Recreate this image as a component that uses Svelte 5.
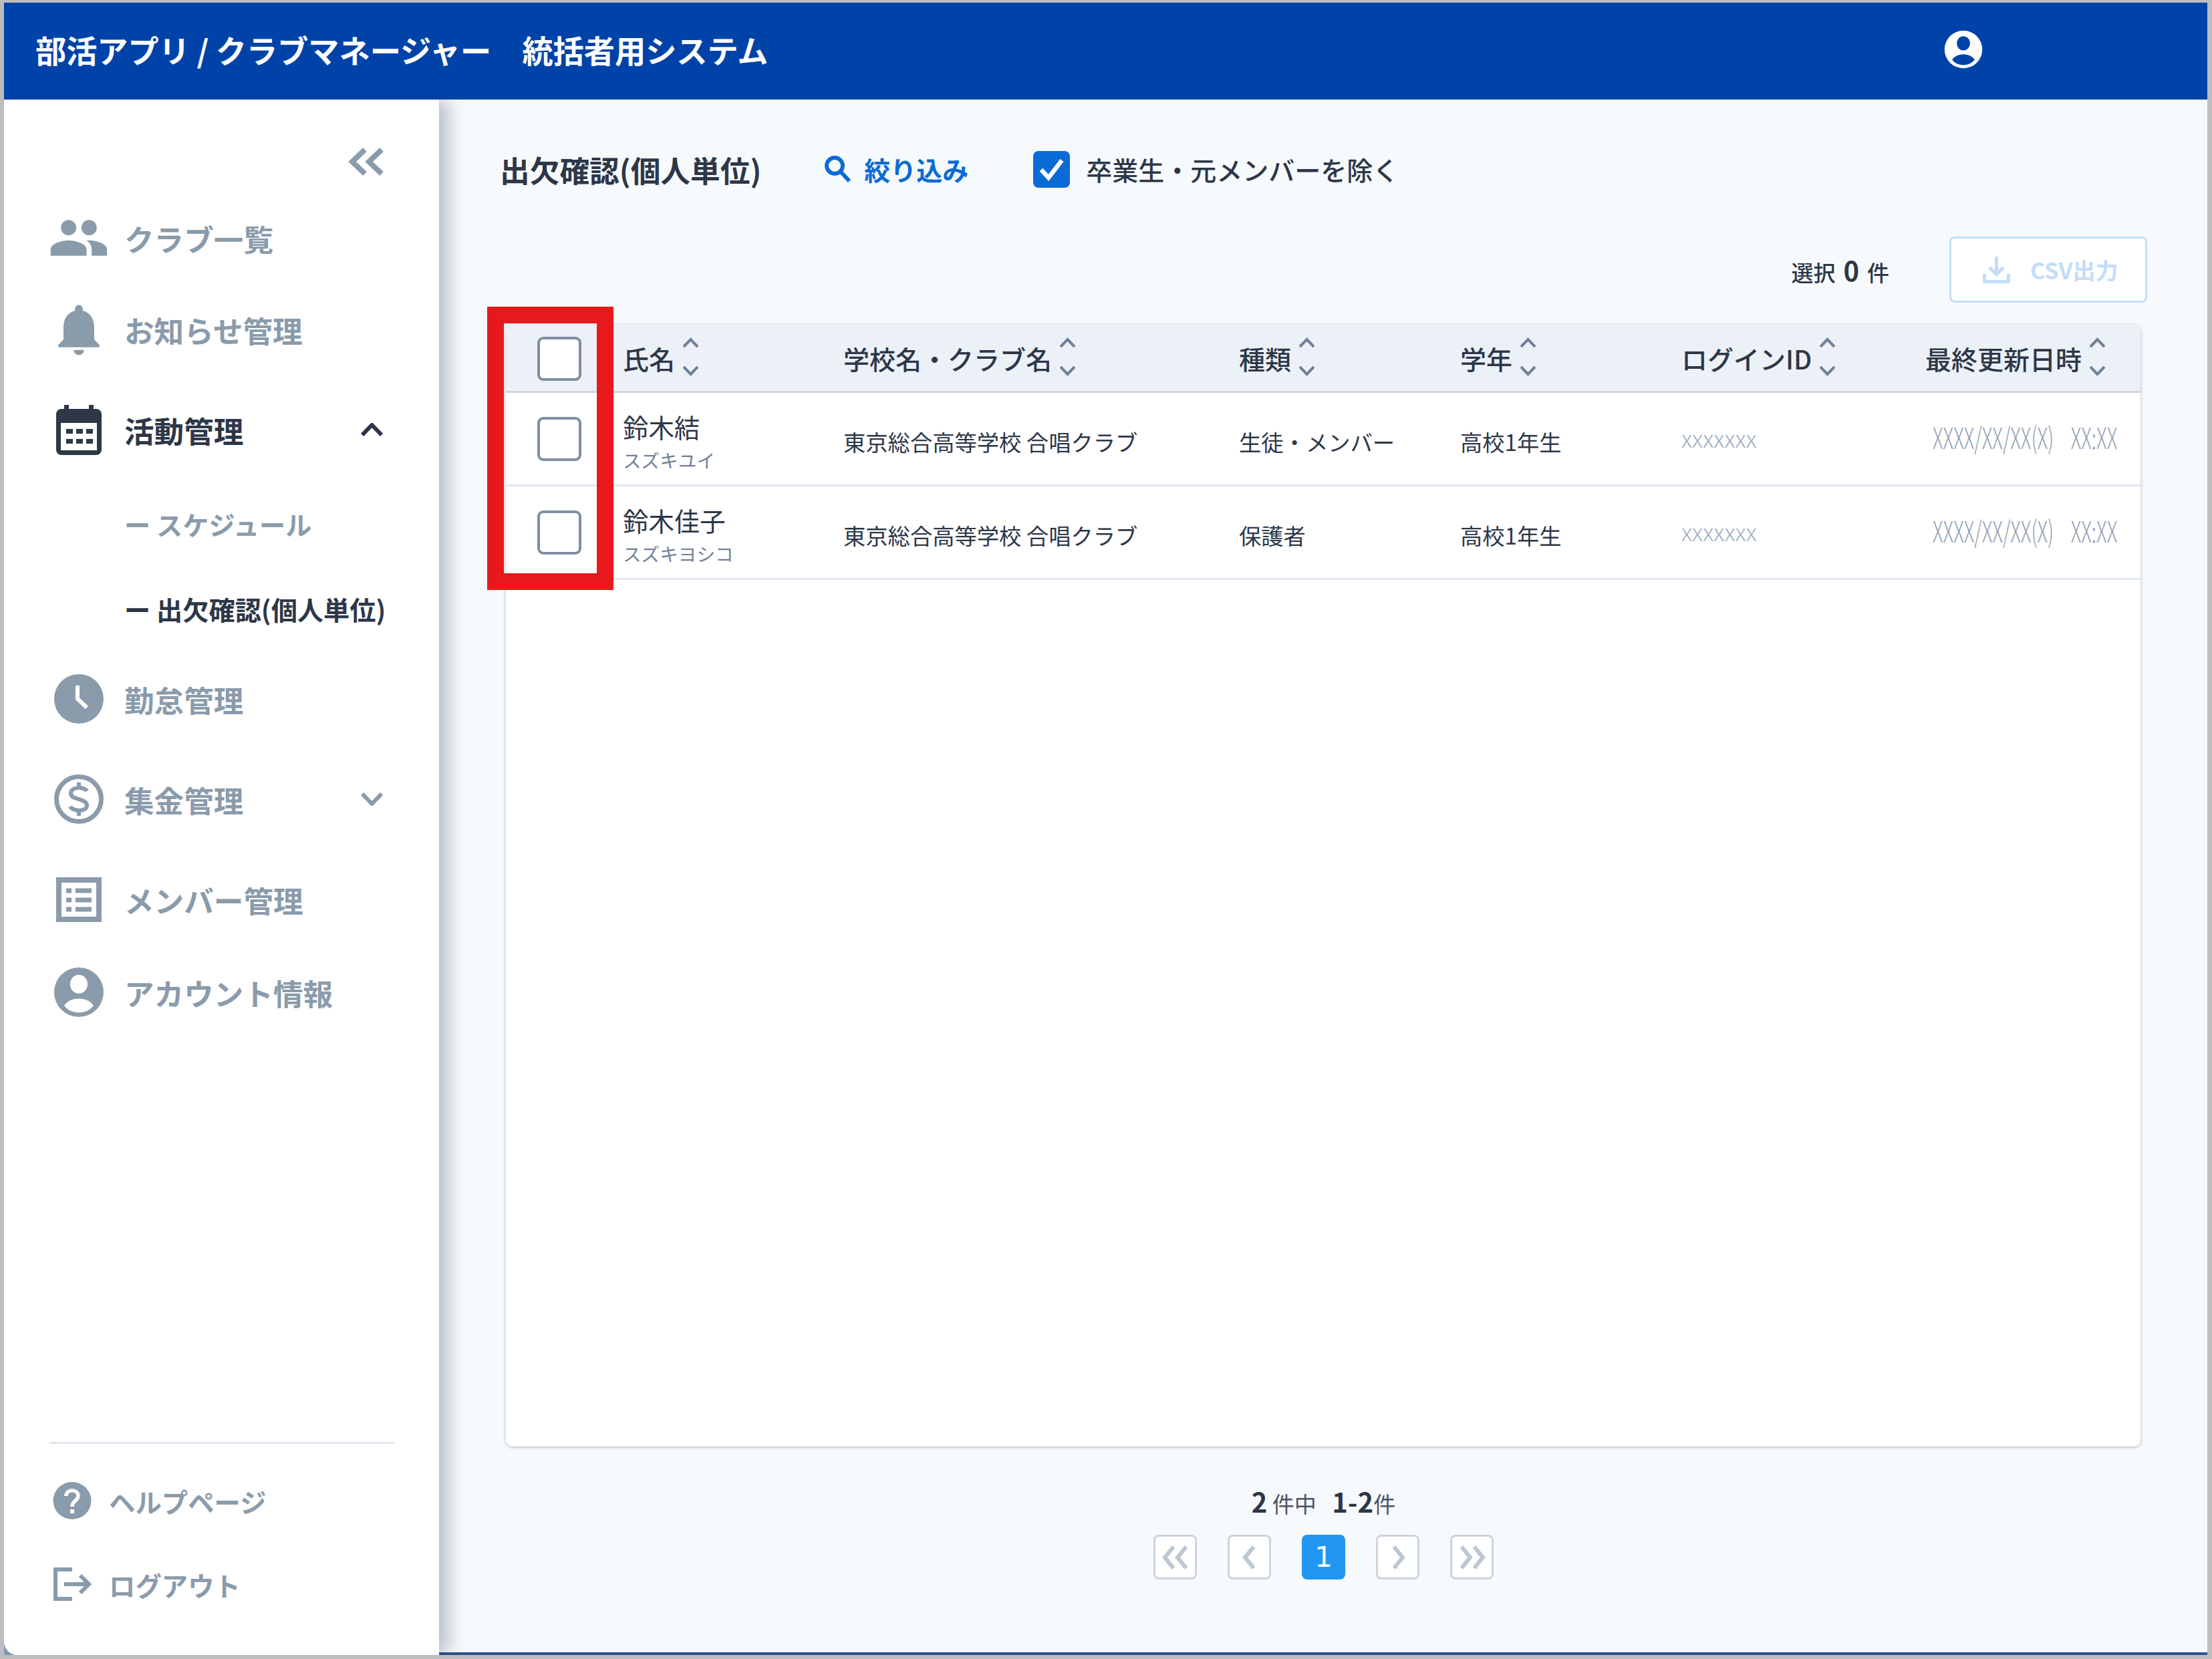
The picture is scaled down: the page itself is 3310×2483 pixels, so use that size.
<script>
  const cols = ['氏名', '学校名・クラブ名', '種類', '学年', 'ログインID', '最終更新日時'];
  const rows = [
    { name: '鈴木結', kana: 'スズキユイ', kind: '生徒・メンバー' },
    { name: '鈴木佳子', kana: 'スズキヨシコ', kind: '保護者' }
  ];
</script>

{#snippet account(cutout)}
  <svg class="ic-account" viewBox="0 0 76 76">
    <circle cx="38" cy="38" r="37" fill="currentColor" />
    <ellipse cx="38" cy="26" rx="13" ry="14" fill={cutout} />
    <path d="M16 58C25 44 51 44 60 58C50 72 26 72 16 58Z" fill={cutout} />
  </svg>
{/snippet}

{#snippet sort()}
  <svg class="sort" viewBox="0 0 25 58" fill="none" stroke="#718096" stroke-width="4">
    <path d="M2 14L12.5 3L23 14" />
    <path d="M2 44L12.5 55L23 44" />
  </svg>
{/snippet}

<div class="root">
  <header class="top">
    <span class="brand">部活アプリ / クラブマネージャー　統括者用システム</span>
    <span class="top-user">{@render account('#0043a8')}</span>
  </header>

  <div class="body">
    <aside class="side">
      <div class="collapse">
        <svg viewBox="0 0 54 44" fill="none" stroke="#8a9bab" stroke-width="8">
          <path d="M25 4L6 22L25 40" />
          <path d="M50 4L31 22L50 40" />
        </svg>
      </div>
      <nav class="nav">
        <div class="item">
          <span class="ico">
            <svg class="w92" viewBox="0 0 24 24" fill="currentColor"><path d="M16 11c1.66 0 2.99-1.34 2.99-3S17.66 5 16 5c-1.66 0-3 1.34-3 3s1.34 3 3 3zm-8 0c1.66 0 2.99-1.34 2.99-3S9.66 5 8 5C6.34 5 5 6.34 5 8s1.34 3 3 3zm0 2c-2.33 0-7 1.17-7 3.5V19h14v-2.5c0-2.33-4.67-3.5-7-3.5zm8 0c-.29 0-.62.02-.97.05 1.16.84 1.97 1.97 1.97 3.45V19h6v-2.5c0-2.33-4.67-3.5-7-3.5z" /></svg>
          </span>
          クラブ一覧
        </div>
        <div class="item">
          <span class="ico">
            <svg class="w92" viewBox="0 0 24 24" fill="currentColor"><path d="M12 22c1.1 0 2-.9 2-2h-4c0 1.1.89 2 2 2zm6-6v-5c0-3.07-1.64-5.64-4.5-6.32V4c0-.83-.67-1.5-1.5-1.5s-1.5.67-1.5 1.5v.68C7.63 5.36 6 7.92 6 11v5l-2 2v1h16v-1l-2-2z" /></svg>
          </span>
          お知らせ管理
        </div>
        <div class="item on">
          <span class="ico">
            <svg class="w68" viewBox="0 0 68 75">
              <path fill="currentColor" d="M12 0h7v6h30V0h7v6h4a8 8 0 0 1 8 8v53a8 8 0 0 1-8 8H8a8 8 0 0 1-8-8V14a8 8 0 0 1 8-8h4z" />
              <rect x="7" y="27" width="54" height="41" fill="#fff" />
              <g fill="currentColor">
                <rect x="15" y="36" width="10" height="7" /><rect x="30" y="36" width="10" height="7" /><rect x="45" y="36" width="10" height="7" />
                <rect x="15" y="51" width="10" height="7" /><rect x="30" y="51" width="10" height="7" /><rect x="45" y="51" width="10" height="7" />
              </g>
            </svg>
          </span>
          活動管理
          <svg class="chev" viewBox="0 0 33 20" fill="none" stroke="currentColor" stroke-width="6"><path d="M2 18L16.5 3L31 18" /></svg>
        </div>
        <div class="item sub">ー スケジュール</div>
        <div class="item sub on">ー 出欠確認(個人単位)</div>
        <div class="item">
          <span class="ico">
            <svg class="w76" viewBox="0 0 76 76">
              <circle cx="38" cy="38" r="37" fill="currentColor" />
              <path d="M36 18V38L50 51" fill="none" stroke="#fff" stroke-width="6" />
            </svg>
          </span>
          勤怠管理
        </div>
        <div class="item">
          <span class="ico">
            <svg class="w76" viewBox="0 0 76 76" fill="none" stroke="currentColor">
              <circle cx="38" cy="38" r="33.5" stroke-width="7" />
              <path d="M50 26C47 20 27 18 26 29C25 40 51 36 50 48C49 58 28 56 25 49" stroke-width="6" />
              <path d="M38 13V21M38 55V63" stroke-width="6" />
            </svg>
          </span>
          集金管理
          <svg class="chev" viewBox="0 0 33 20" fill="none" stroke="currentColor" stroke-width="6"><path d="M2 2L16.5 17L31 2" /></svg>
        </div>
        <div class="item">
          <span class="ico">
            <svg class="w68" viewBox="0 0 68 67" fill="none" stroke="currentColor">
              <rect x="4" y="4" width="60" height="59" stroke-width="8" />
              <path d="M15 20h8M29 20h24M15 34h8M29 34h24M15 48h8M29 48h24" stroke-width="7" />
            </svg>
          </span>
          メンバー管理
        </div>
        <div class="item">
          <span class="ico">{@render account('#fff')}</span>
          アカウント情報
        </div>
      </nav>

      <div class="bottom">
        <div class="rule"></div>
        <div class="link help">
          <svg viewBox="0 0 58 56">
            <ellipse cx="29" cy="28" rx="28.5" ry="28" fill="currentColor" />
            <path d="M20 21C20 10 38 10 38 21C38 28 29 28 29 37" fill="none" stroke="#fff" stroke-width="5.5" />
            <rect x="26" y="41" width="6" height="6" fill="#fff" />
          </svg>
          ヘルプページ
        </div>
        <div class="link out">
          <svg viewBox="0 0 58 50" fill="none" stroke="currentColor" stroke-width="6">
            <path d="M29 3H4V47H29" />
            <path d="M17 25H53M41 12L54 25L41 38" />
          </svg>
          ログアウト
        </div>
      </div>
    </aside>

    <main class="main">
      <div class="bar">
        <h1>出欠確認(個人単位)</h1>
        <div class="filter">
          <svg viewBox="0 0 41 40" fill="none" stroke="currentColor" stroke-width="6">
            <circle cx="16" cy="15" r="12" />
            <path d="M25 24L38 38" />
          </svg>
          絞り込み
        </div>
        <div class="grad">
          <span class="chk">
            <svg viewBox="0 0 55 55" fill="none" stroke="#fff" stroke-width="6.5"><path d="M12 28L23 40L43 14" /></svg>
          </span>
          卒業生・元メンバーを除く
        </div>
      </div>

      <div class="tools">
        <span class="sel">選択<b>0</b>件</span>
        <div class="csv">
          <svg viewBox="0 0 41 40" fill="none" stroke="currentColor" stroke-width="5">
            <path d="M20.5 0V26M10 16L20.5 27L31 16" />
            <path d="M2.5 26V37.5H38.5V26" />
          </svg>
          CSV出力
        </div>
      </div>

      <section class="card">
        <div class="thead">
          <div class="cell"><span class="box head"></span></div>
          {#each cols as c}
            <div class="th">{c}{@render sort()}</div>
          {/each}
        </div>
        {#each rows as r}
          <div class="tr">
            <div class="cell"><span class="box row"></span></div>
            <div class="who">
              <span class="nm">{r.name}</span>
              <span class="kn">{r.kana}</span>
            </div>
            <div class="td">東京総合高等学校 合唱クラブ</div>
            <div class="td">{r.kind}</div>
            <div class="td">高校1年生</div>
            <div class="td id">xxxxxxx</div>
            <div class="date"><span>XXXX/XX/XX(X)    XX:XX</span></div>
          </div>
        {/each}
      </section>

      <footer class="foot">
        <div class="count"><b>2</b> 件中 <b class="range">1-2</b>件</div>
        <div class="pages">
          <span class="pg"><svg viewBox="0 0 42 38"><path d="M18 3L5 19L18 35M37 3L24 19L37 35" /></svg></span>
          <span class="pg"><svg viewBox="0 0 42 38"><path d="M27 3L14 19L27 35" /></svg></span>
          <span class="pg active">1</span>
          <span class="pg"><svg viewBox="0 0 42 38"><path d="M15 3L28 19L15 35" /></svg></span>
          <span class="pg"><svg viewBox="0 0 42 38"><path d="M5 3L18 19L5 35M24 3L37 19L24 35" /></svg></span>
        </div>
      </footer>
    </main>
  </div>

  <div class="mark"></div>
</div>

<style>
  :global(body) {
    margin: 0;
    background: #fff;
  }
  * {
    box-sizing: border-box;
  }
  .root {
    position: relative;
    width: 3310px;
    height: 2483px;
    padding: 4px 7px 6px 6px;
    background: #bcbdbe;
    display: flex;
    flex-direction: column;
    font-family: "Noto Sans CJK JP", "Noto Sans", sans-serif;
    color: #2d3748;
  }
  .top {
    height: 145px;
    flex: none;
    background: #0043a8;
    color: #fff;
    display: flex;
    align-items: center;
    padding-left: 47px;
  }
  .brand {
    font-size: 46.2px;
    font-weight: 700;
    white-space: pre;
    margin-bottom: 6px;
  }
  .top-user {
    margin-left: auto;
    margin-right: 336px;
    margin-bottom: 6px;
    display: flex;
  }
  .top-user .ic-account,
  .top-user :global(svg) {
    width: 58px;
    height: 58px;
  }
  .body {
    flex: 1;
    min-height: 0;
    display: flex;
    background: #7f9cc0;
  }
  .side {
    width: 651px;
    flex: none;
    background: #fff;
    border-bottom-left-radius: 20px;
    display: flex;
    flex-direction: column;
    position: relative;
    z-index: 1;
    box-shadow: 14px 0 26px rgba(45, 55, 72, 0.3);
    clip-path: inset(0 -60px 0 0);
  }
  .collapse {
    height: 139px;
    flex: none;
    padding: 71px 0 0 515px;
  }
  .collapse svg {
    display: block;
    width: 54px;
    height: 44px;
  }
  .nav {
    display: grid;
    grid-template-rows: 136px 138px 162px 120px 134px 136px 164px 136px 142px;
  }
  .item {
    display: flex;
    align-items: center;
    padding-left: 72px;
    font-size: 44.6px;
    font-weight: 700;
    color: #8a9bab;
    white-space: nowrap;
  }
  .item.on {
    color: #2d3748;
  }
  .ico {
    width: 80px;
    height: 80px;
    margin-right: 28px;
    flex: none;
    display: flex;
    align-items: center;
    justify-content: center;
  }
  .w92 {
    width: 92px;
    height: 92px;
    flex: none;
  }
  .w76,
  .ico :global(.ic-account) {
    width: 76px;
    height: 76px;
    flex: none;
  }
  .w68 {
    width: 68px;
    flex: none;
  }
  .chev {
    width: 33px;
    height: 20px;
    margin-left: auto;
    margin-right: 84px;
  }
  .sub {
    padding-left: 180px;
    font-size: 39.2px;
  }
  .bottom {
    margin-top: auto;
    padding-bottom: 66px;
  }
  .rule {
    height: 3px;
    margin: 0 67px 0 68px;
    background: #e2e8f0;
  }
  .link {
    display: flex;
    align-items: center;
    padding-left: 73px;
    font-size: 39.4px;
    font-weight: 700;
    color: #8a9bab;
    gap: 26px;
  }
  .link svg {
    width: 58px;
    flex: none;
  }
  .help {
    height: 170px;
  }
  .out {
    height: 80px;
  }
  .main {
    flex: 1;
    min-width: 0;
    background: #f7fafc;
    border-bottom: 4px solid #2c4f8f;
    padding: 74px 90px 0 91px;
    display: flex;
    flex-direction: column;
  }
  .bar {
    height: 60px;
    flex: none;
    display: flex;
    align-items: center;
  }
  h1 {
    margin: 0;
    font-size: 44.7px;
    font-weight: 700;
    white-space: nowrap;
  }
  .filter {
    margin-left: 94px;
    display: flex;
    align-items: center;
    gap: 19px;
    font-size: 39px;
    font-weight: 700;
    color: #0b6bd6;
    white-space: nowrap;
  }
  .filter svg {
    width: 41px;
    height: 40px;
  }
  .grad {
    margin-left: 97px;
    display: flex;
    align-items: center;
    gap: 24px;
    font-size: 39px;
    font-weight: 500;
    white-space: nowrap;
  }
  .chk {
    width: 55px;
    height: 55px;
    background: #0b6bd6;
    border-radius: 8px;
    display: flex;
  }
  .tools {
    height: 99px;
    flex: none;
    margin-top: 71px;
    display: flex;
    align-items: center;
    justify-content: flex-end;
  }
  .sel {
    font-size: 33px;
    font-weight: 500;
    margin-right: 90px;
    white-space: pre;
  }
  .sel b {
    font-size: 40px;
    font-weight: 700;
    margin: 0 12px;
  }
  .csv {
    width: 296px;
    height: 99px;
    background: #fff;
    border: 3px solid #c3ddfb;
    border-radius: 8px;
    display: flex;
    align-items: center;
    padding-left: 47px;
    gap: 30px;
    color: #c3ddfb;
    font-size: 34px;
    font-weight: 700;
  }
  .csv svg {
    width: 41px;
    height: 40px;
    flex: none;
  }
  .card {
    flex: 1;
    min-height: 0;
    margin: 33px 10px 0 9px;
    background: #fff;
    border-radius: 10px;
    box-shadow: 0 1px 5px rgba(45, 55, 72, 0.35);
  }
  .thead,
  .tr {
    display: grid;
    grid-template-columns: 175px 330px 592px 331px 331px 365px 318px;
    align-items: center;
  }
  .thead {
    height: 102px;
    background: #ecf1f8;
    border-bottom: 3px solid #cbd5e0;
    border-radius: 10px 10px 0 0;
  }
  .tr {
    height: 140px;
    padding-top: 8px;
    border-bottom: 3px solid #e2e8f0;
  }
  .cell {
    padding-left: 47px;
    display: flex;
  }
  .box {
    width: 66px;
    height: 66px;
    background: #fff;
    border: 4px solid #7f8ea3;
    border-radius: 9px;
  }
  .box.head {
    margin-top: 3px;
  }
  .box.row {
    margin-bottom: 7px;
  }
  .th {
    display: flex;
    align-items: center;
    gap: 11px;
    font-size: 39px;
    font-weight: 500;
    white-space: nowrap;
  }
  .sort {
    width: 25px;
    height: 58px;
    flex: none;
    margin-top: -4px;
  }
  .who {
    display: flex;
    flex-direction: column;
  }
  .nm {
    font-size: 38.4px;
    line-height: 48px;
    margin-top: -2px;
  }
  .kn {
    font-size: 27.6px;
    line-height: 34px;
    margin-top: 9px;
    color: #718096;
  }
  .td {
    font-size: 33.3px;
    white-space: nowrap;
  }
  .td.id {
    font-size: 35px;
    font-weight: 300;
    color: #a0aec0;
    margin-bottom: 12px;
  }
  .date {
    padding: 0 0 16px 11px;
    font-size: 44px;
    font-weight: 300;
    color: #94a0b2;
    white-space: pre;
  }
  .date span {
    display: inline-block;
    transform: scaleX(0.655);
    transform-origin: left center;
  }
  .foot {
    height: 308px;
    flex: none;
    display: flex;
    flex-direction: column;
    align-items: center;
    padding-top: 56px;
  }
  .count {
    height: 52px;
    line-height: 52px;
    font-size: 33px;
    white-space: pre;
    color: #4a5568;
  }
  .count b {
    font-size: 40px;
    font-weight: 700;
    color: #2d3748;
  }
  .range {
    margin-left: 16px;
  }
  .pages {
    margin-top: 24px;
    display: flex;
    gap: 46px;
  }
  .pg {
    width: 65px;
    height: 67px;
    background: #fff;
    border: 3px solid #cbd5e0;
    border-radius: 8px;
    display: flex;
    align-items: center;
    justify-content: center;
  }
  .pg svg {
    width: 42px;
    height: 38px;
    fill: none;
    stroke: #bcc8d4;
    stroke-width: 6;
  }
  .pg.active {
    background: #2196f3;
    border-color: #2196f3;
    color: #fff;
    font-family: "DejaVu Sans", sans-serif;
    font-size: 42px;
  }
  .mark {
    position: absolute;
    left: 729px;
    top: 459px;
    width: 189px;
    height: 424px;
    border: 25px solid #e8191c;
    pointer-events: none;
    z-index: 2;
  }
</style>
